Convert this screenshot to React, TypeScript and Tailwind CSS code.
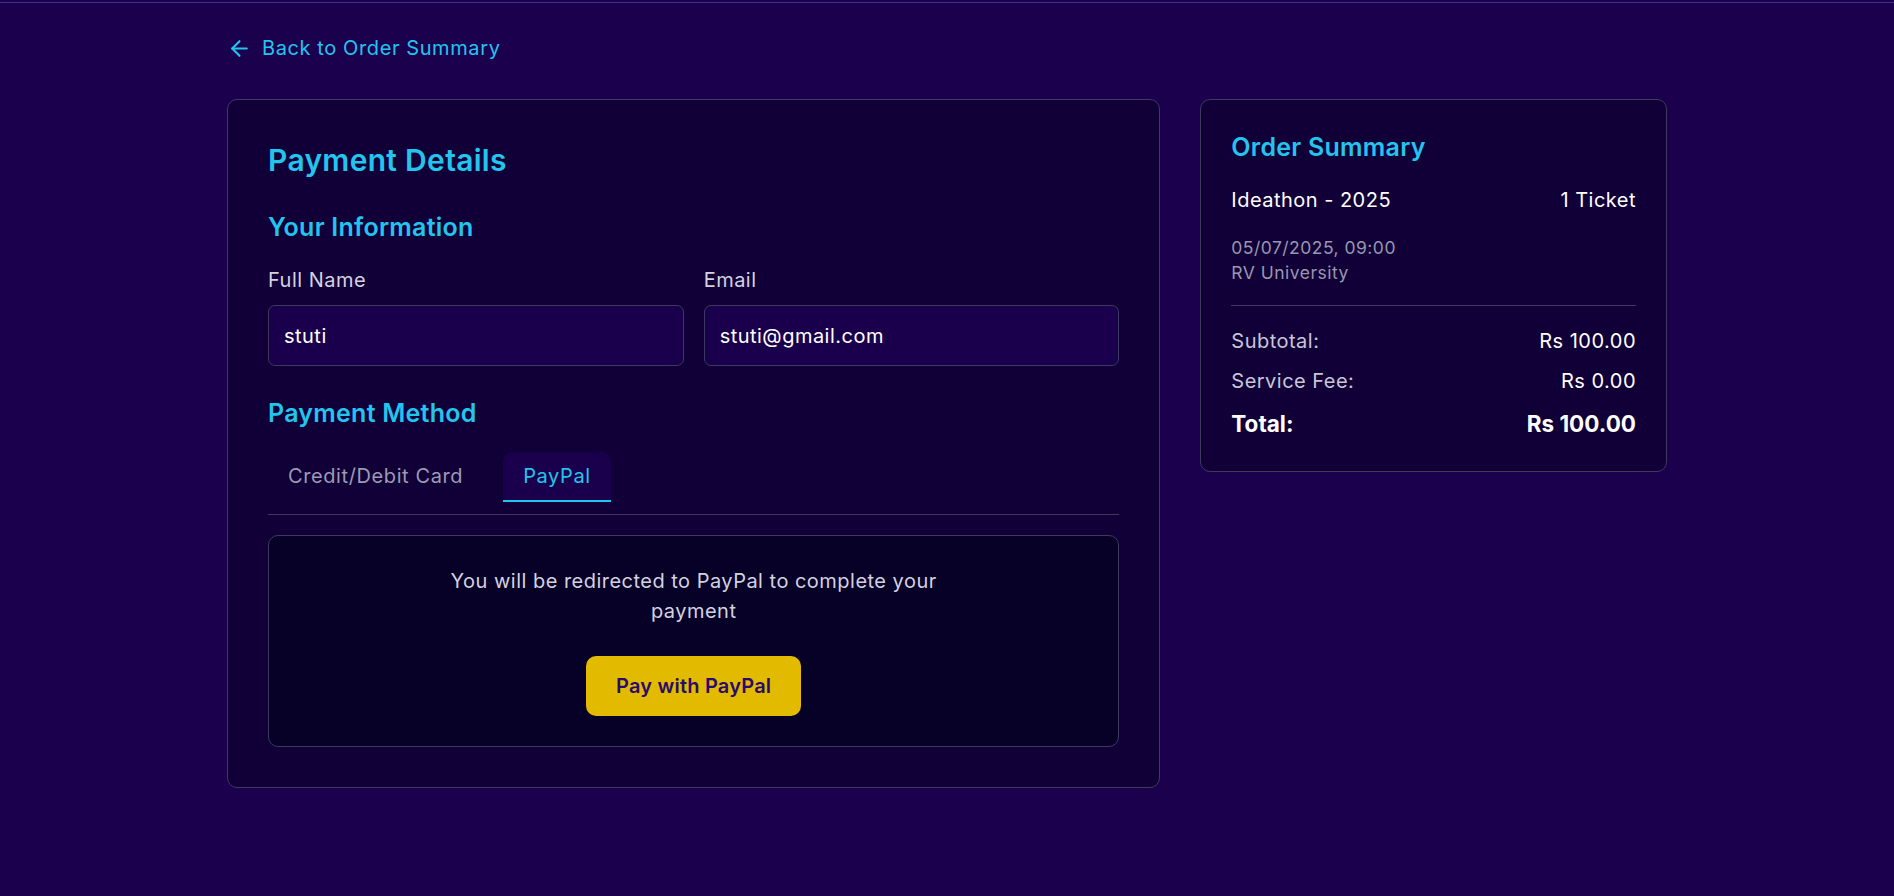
import { ArrowLeft } from "lucide-react";

const font = { fontFamily: "Inter, 'Noto Sans', sans-serif" };

const Field = ({ label, value }: { label: string; value: string }) => (
  <div className="flex flex-col">
    <label className="text-[20px] leading-[30px] text-[#d4d2e0] mb-[10px]">{label}</label>
    <div className="h-[61px] px-[15px] flex items-center rounded-[7px] border border-[#3d3a5e] bg-[#1a004c] text-[20px] text-white">
      {value}
    </div>
  </div>
);

const SummaryRow = ({ label, value }: { label: string; value: string }) => (
  <div className="flex justify-between text-[20px] leading-[30px]">
    <span className="text-[#c9c6d8]">{label}</span>
    <span className="text-white">{value}</span>
  </div>
);

const App = () => {
  return (
    <div style={font} className="min-h-[896px] bg-[#1b004e] tracking-[0.03em]">
      <div className="h-[3px] border-b border-[#3a3290]" />
      <div className="max-w-[1440px] mx-auto pt-[30px]">
        <button className="flex items-center gap-[10px] h-[30px] text-[20px] text-[#22c5ee] mb-[36px] tracking-[0.03em]">
          <ArrowLeft size={25} strokeWidth={2} />
          <span>Back to Order Summary</span>
        </button>

        <div className="grid grid-cols-[2fr_1fr] gap-[40px] items-start">
          {/* payment card */}
          <div className="rounded-[10px] border border-[#3d3a5e] bg-[#110038] p-[40px]">
            <h1 className="text-[30px] leading-[40px] font-semibold tracking-[0.01em] text-[#22c5ee] mb-[30px]">Payment Details</h1>

            <h2 className="text-[25px] leading-[35px] font-semibold tracking-[0.01em] text-[#22c5ee] mb-[20px]">Your Information</h2>
            <div className="grid grid-cols-2 gap-[20px]">
              <Field label="Full Name" value="stuti" />
              <Field label="Email" value="stuti@gmail.com" />
            </div>

            <h2 className="text-[25px] leading-[35px] font-semibold tracking-[0.01em] text-[#22c5ee] mt-[30px] mb-[21px]">Payment Method</h2>
            <div className="flex gap-[20px] border-b border-[#3d3a5e] pb-[12px]">
              <button className="px-[20px] h-[50px] text-[20px] tracking-[0.03em] text-[#9d9ab4] border-b-2 border-transparent">
                Credit/Debit Card
              </button>
              <button className="px-[20px] h-[50px] text-[20px] tracking-[0.03em] text-[#22c5ee] bg-[#1a004c] rounded-t-[10px] border-b-2 border-[#22c5ee]">
                PayPal
              </button>
            </div>

            <div className="mt-[20px] rounded-[10px] border border-[#3d3a5e] bg-[#070027] p-[30px] flex flex-col items-center">
              <p className="max-w-[520px] text-center text-[20px] leading-[30px] text-[#d4d2e0]">
                You will be redirected to PayPal to complete your payment
              </p>
              <button className="mt-[30px] px-[30px] py-[15px] rounded-[10px] bg-[#e2bb00] text-[20px] leading-[30px] font-semibold tracking-[0.01em] text-[#2b0a6e]">
                Pay with PayPal
              </button>
            </div>
          </div>

          {/* order summary */}
          <div className="rounded-[10px] border border-[#3d3a5e] bg-[#110038] p-[30px]">
            <h2 className="text-[25px] leading-[35px] font-semibold tracking-[0.01em] text-[#22c5ee] mb-[20px]">Order Summary</h2>
            <div className="flex justify-between text-[20px] leading-[30px] text-white">
              <span>Ideathon - 2025</span>
              <span>1 Ticket</span>
            </div>
            <div className="mt-[20px] text-[17.5px] leading-[25px] text-[#9a97b0]">
              <div>05/07/2025, 09:00</div>
              <div>RV University</div>
            </div>
            <div className="mt-[20px] pt-[20px] border-t border-[#3d3a5e] flex flex-col gap-[10px]">
              <SummaryRow label="Subtotal:" value="Rs 100.00" />
              <SummaryRow label="Service Fee:" value="Rs 0.00" />
              <div className="flex justify-between text-[22.5px] leading-[35px] font-bold tracking-normal text-white">
                <span>Total:</span>
                <span>Rs 100.00</span>
              </div>
            </div>
          </div>
        </div>
      </div>
    </div>
  );
};

export default App;
